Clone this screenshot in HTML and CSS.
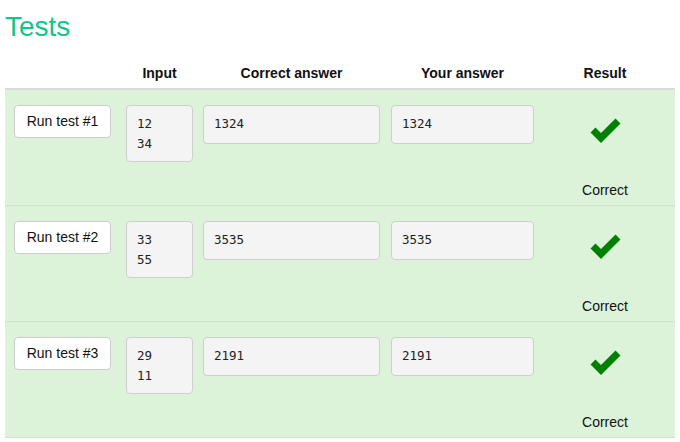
FILE: index.html
```html
<!DOCTYPE html>
<html>
<head>
<meta charset="utf-8">
<link rel="stylesheet" href="styles.css">
</head>
<body>
<div class="page">
  <h1 class="title">Tests</h1>
  <div class="tests">
    <div class="grid head">
      <span></span>
      <span class="lbl w-in">Input</span>
      <span class="lbl w-ca">Correct answer</span>
      <span class="lbl w-ya">Your answer</span>
      <span class="lbl res">Result</span>
    </div>

    <div class="grid row">
      <button class="run">Run test #1</button>
      <div class="box w-in tall">12
34</div>
      <div class="box w-ca">1324</div>
      <div class="box w-ya">1324</div>
      <div class="res result">
        <svg class="check" width="31" height="26" viewBox="0 0 31 26"><polyline points="3,12 11,20 28,3" fill="none" stroke="#008000" stroke-width="7" stroke-linejoin="miter"/></svg>
        <span class="verdict">Correct</span>
      </div>
    </div>

    <div class="grid row">
      <button class="run">Run test #2</button>
      <div class="box w-in tall">33
55</div>
      <div class="box w-ca">3535</div>
      <div class="box w-ya">3535</div>
      <div class="res result">
        <svg class="check" width="31" height="26" viewBox="0 0 31 26"><polyline points="3,12 11,20 28,3" fill="none" stroke="#008000" stroke-width="7" stroke-linejoin="miter"/></svg>
        <span class="verdict">Correct</span>
      </div>
    </div>

    <div class="grid row">
      <button class="run">Run test #3</button>
      <div class="box w-in tall">29
11</div>
      <div class="box w-ca">2191</div>
      <div class="box w-ya">2191</div>
      <div class="res result">
        <svg class="check" width="31" height="26" viewBox="0 0 31 26"><polyline points="3,12 11,20 28,3" fill="none" stroke="#008000" stroke-width="7" stroke-linejoin="miter"/></svg>
        <span class="verdict">Correct</span>
      </div>
    </div>
  </div>
</div>
</body>
</html>
```

FILE: styles.css
```css
html, body {
  margin: 0;
  padding: 0;
  background: #ffffff;
}

body {
  font-family: "Liberation Sans", Arial, sans-serif;
  font-size: 14px;
  color: #111;
}

.page {
  padding: 0 5px;
}

.title {
  margin: 11px 0 0 0;
  font-size: 28px;
  font-weight: normal;
  line-height: 32px;
  color: #0fc68b;
}

.grid {
  display: grid;
  grid-template-columns: 112px 77px 188px 144px 1fr;
  padding-left: 9px;
}

.head {
  height: 47px;
  box-sizing: border-box;
  align-items: end;
  padding-bottom: 7px;
  border-bottom: 2px solid #dadada;
}

.lbl {
  font-weight: bold;
  text-align: center;
  line-height: 16px;
}

.w-in { width: 67px; }
.w-ca { width: 177px; }
.w-ya { width: 143px; }

.res {
  justify-self: stretch;
  text-align: center;
}

.row {
  height: 116px;
  box-sizing: border-box;
  padding-top: 15px;
  align-items: start;
  background: #dcf3d9;
  border-bottom: 1px solid #d2e0cf;
}

.run {
  width: 97px;
  height: 33px;
  box-sizing: border-box;
  background: #ffffff;
  border: 1px solid #cccccc;
  border-radius: 4px;
  font-family: "Liberation Sans", Arial, sans-serif;
  font-size: 14px;
  color: #111;
  padding: 0 0 2px 0;
  margin: 0;
}

.box {
  box-sizing: border-box;
  height: 39px;
  padding: 8px 10px 7px 10px;
  background: #f4f4f4;
  border: 1px solid #cfcfcf;
  border-radius: 4px;
  font-family: "DejaVu Sans Mono", "Liberation Mono", monospace;
  font-size: 12.5px;
  line-height: 20px;
  color: #222;
  white-space: pre;
}

.box.tall {
  height: 57px;
}

.result {
  display: flex;
  flex-direction: column;
  align-items: center;
}

.check {
  display: block;
  margin-top: 13px;
  margin-left: 1px;
}

.verdict {
  margin-top: 38px;
  line-height: 16px;
}
```
